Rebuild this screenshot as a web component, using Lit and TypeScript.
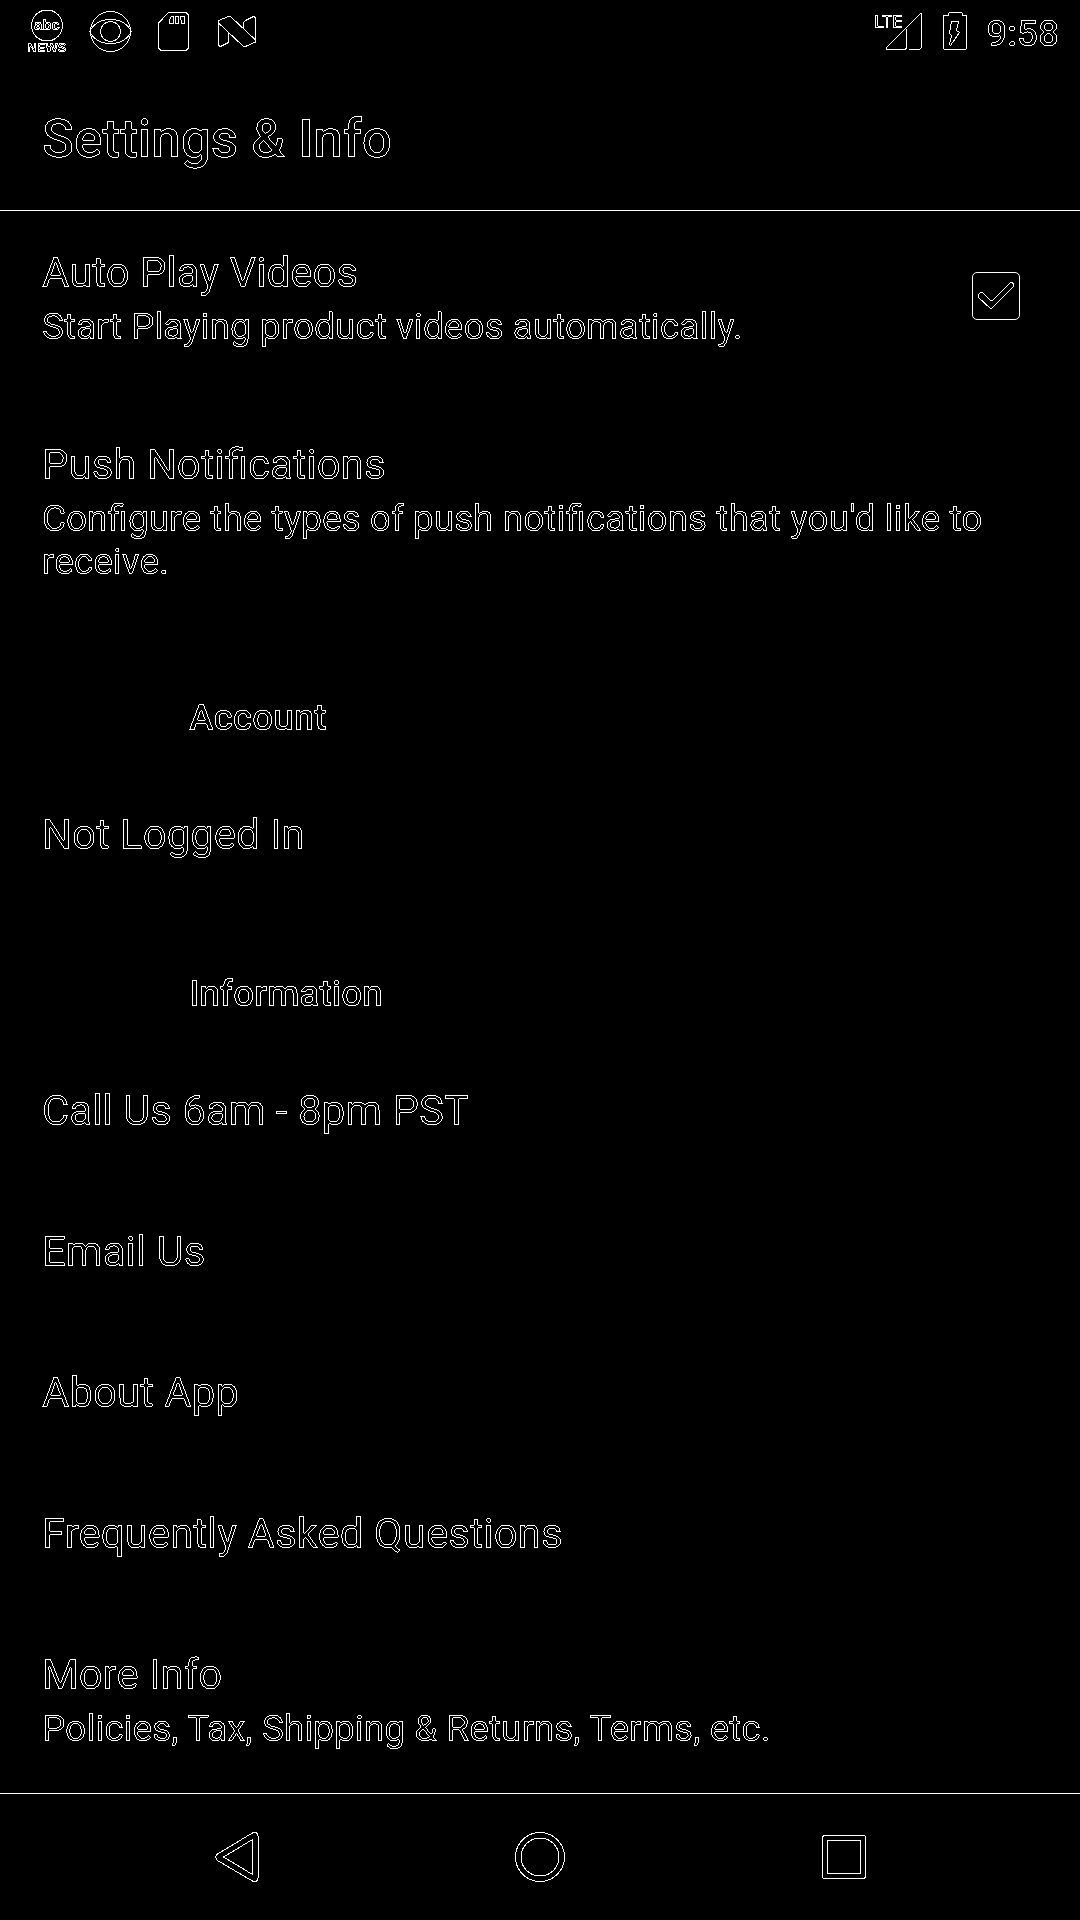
import { LitElement, html, css, svg, nothing } from "lit";
import { customElement, state } from "lit/decorators.js";

interface Entry {
  title: string;
  summary?: string;
  href: string;
}

const ACCOUNT: Entry[] = [{ title: "Not Logged In", href: "#login" }];

const INFORMATION: Entry[] = [
  { title: "Call Us 6am - 8pm PST", href: "#call" },
  { title: "Email Us", href: "#email" },
  { title: "About App", href: "#about" },
  { title: "Frequently Asked Questions", href: "#faq" },
  { title: "More Info", summary: "Policies, Tax, Shipping & Returns, Terms, etc.", href: "#more" },
];

// Keeps only the one-pixel contour of whatever it is applied to.
const contour = html`<svg class="defs" width="0" height="0" aria-hidden="true">
  <filter id="contour" x="-5%" y="-20%" width="110%" height="140%" color-interpolation-filters="sRGB">
    <feComponentTransfer><feFuncA type="linear" slope="255" intercept="-60" /></feComponentTransfer>
    <feConvolveMatrix order="3" kernelMatrix="0 -1 0 -1 4 -1 0 -1 0" divisor="1" edgeMode="none" preserveAlpha="false" />
  </filter>
</svg>`;

const outlined = css`
  :host {
    font-family: Roboto, "Liberation Sans", sans-serif;
    color: #fff;
  }
  svg {
    display: block;
    flex: none;
    fill: none;
    stroke: #fff;
    stroke-width: 1;
    shape-rendering: crispEdges;
  }
  .defs {
    position: absolute;
  }
  .title,
  .summary,
  .heading,
  .section,
  .clock,
  .mark {
    filter: url(#contour);
  }
`;

@customElement("status-bar")
class StatusBar extends LitElement {
  static styles = [
    outlined,
    css`
      :host {
        display: flex;
        justify-content: space-between;
        align-items: center;
        height: 63px;
        padding: 0 21px 0 25px;
      }
      .group {
        display: flex;
        align-items: center;
        gap: 20px;
      }
      .right {
        gap: 16px;
      }
      .clock {
        padding-top: 3px;
        font-size: 37px;
        line-height: 43px;
        font-weight: 500;
      }
      .mark {
        fill: #fff;
        stroke: none;
      }
      .abc {
        font: 700 15px "Liberation Sans", sans-serif;
      }
      .news {
        font: 700 13px "Liberation Sans", sans-serif;
      }
      .lte {
        font: 500 18px Roboto, sans-serif;
      }
    `,
  ];

  render() {
    return html`
      ${contour}
      <div class="group">
        <svg width="44" height="63" viewBox="25 0 44 63">
          <circle cx="47" cy="25.5" r="15.5" />
          <text class="mark abc" x="47" y="30" text-anchor="middle">abc</text>
          <text class="mark news" x="47" y="52" text-anchor="middle">NEWS</text>
        </svg>
        <svg width="44" height="63" viewBox="89 0 44 63">
          <circle cx="110.5" cy="31.5" r="20" />
          <path d="M89.5 31.5C94 23 102 19.5 110.5 19.5S127 23 131.5 31.5C127 40 119 43.5 110.5 43.5S94 40 89.5 31.5Z" />
          <circle cx="110.5" cy="31.5" r="10" />
        </svg>
        <svg width="44" height="63" viewBox="153 0 44 63">
          <path d="M168.500 12.500H186L188.500 15V48L186 50.500H161L158.500 48V23Z" />
          <path d="M170.500 17.500L169.500 20.500V23.500H173.500V16.500H171.500ZM175.500 16.500H178.500V23.500H175.500ZM180.500 16.500H184.500V23.500H181.500Z" />
        </svg>
        <svg width="44" height="63" viewBox="217 0 44 63">
          <path d="M218.500 20.500L228.500 16.500H230.500L255.500 40V42L245.500 46.500H243.500L218.500 23Z" />
          <path d="M218.500 20.500V45.500L220.500 46.500L228.500 42.500V32.500M255.500 41V17.500L253.500 16.500L245.500 20.500L243.500 22.500V29" />
        </svg>
      </div>
      <div class="group right">
        <svg width="50" height="63" viewBox="874 0 50 63">
          <path d="M886.500 49.500V47.500L920.500 13.500H921.500V47.500L919.500 49.500H909M886.500 49.500H905L906.500 48V29" />
          <text class="mark lte" x="874" y="28">LTE</text>
        </svg>
        <svg width="30" height="63" viewBox="940 0 30 63">
          <path d="M943.500 15.500H948.500V13.500L949.500 12.500H961.500L962.500 13.500V15.500H966.500V48.500L965.500 49.500H944.500L943.500 48.500Z" />
          <path d="M951.500 21.500H958.500L956.500 30.500L959.500 32.500L950.500 45.500L949.500 44.500L951.500 35.500L949.500 33.500Z" />
        </svg>
        <time class="clock">9:58</time>
      </div>
    `;
  }
}

@customElement("setting-row")
class SettingRow extends LitElement {
  static properties = { entry: { attribute: false } };
  declare entry: Entry;

  static styles = [
    outlined,
    css`
      :host {
        display: block;
      }
      .row {
        display: flex;
        flex-direction: column;
        gap: 8px;
        padding: 37px 42px 55px;
        color: inherit;
        text-decoration: none;
      }
      .title {
        font-size: 42px;
        line-height: 49px;
      }
      .summary {
        font-size: 37px;
        line-height: 43px;
      }
    `,
  ];

  render() {
    const { title, summary, href } = this.entry;
    return html`${contour}<a class="row" href=${href}>
      <span class="title">${title}</span>
      ${summary ? html`<span class="summary">${summary}</span>` : nothing}
    </a>`;
  }
}

@customElement("nav-bar")
class NavBar extends LitElement {
  static styles = [
    outlined,
    css`
      :host {
        display: flex;
        justify-content: center;
        border-top: 1px solid #fff;
        height: 126px;
      }
      .key {
        display: flex;
        flex: 0 1 304px;
        align-items: center;
        justify-content: center;
        border: 0;
        padding: 0;
        background: none;
      }
    `,
  ];

  render() {
    const keys = [
      {
        label: "Back",
        shape: svg`<path d="M7.500 23L41.500 2.500Q47.500 -1 48.500 6.500V45.500Q47.500 53 41.500 49.500L7.500 29.500Q4 26 7.500 23Z M13.500 26L42.500 8.500V43.500Z" />`,
      },
      { label: "Home", shape: svg`<circle cx="26" cy="26" r="24.500" /><circle cx="26" cy="26" r="19" />` },
      {
        label: "Recent apps",
        shape: svg`<rect x="4.500" y="4.500" width="43" height="43" rx="2.500" /><rect x="9.500" y="9.500" width="33" height="33" rx="1" />`,
      },
    ];
    return keys.map(
      (k) => html`<button class="key" type="button" aria-label=${k.label}>
        <svg width="52" height="52" viewBox="0 0 52 52">${k.shape}</svg>
      </button>`
    );
  }
}

@customElement("app-root")
class AppRoot extends LitElement {
  @state() autoPlay = true;

  static styles = [
    outlined,
    css`
      :host {
        display: flex;
        flex-direction: column;
        min-height: 100vh;
        background: #000;
      }
      .toolbar {
        padding: 45px 42px 40px;
        border-bottom: 1px solid #fff;
      }
      .heading {
        margin: 0;
        font-size: 53px;
        line-height: 62px;
        font-weight: 500;
      }
      .content {
        flex: 1;
      }
      .section {
        margin: 0;
        padding: 58px 42px 34px 189px;
        font-size: 37px;
        line-height: 43px;
        font-weight: 500;
      }
      .toggle {
        display: flex;
        justify-content: space-between;
        align-items: flex-start;
        padding: 37px 60px 55px 42px;
      }
      .label {
        display: flex;
        flex-direction: column;
        gap: 8px;
      }
      .title {
        font-size: 42px;
        line-height: 49px;
      }
      .summary {
        font-size: 37px;
        line-height: 43px;
      }
      .tick {
        display: grid;
        margin-top: 24px;
      }
      .box,
      .tick svg {
        grid-area: 1 / 1;
      }
      .box {
        appearance: none;
        width: 48px;
        height: 48px;
        margin: 0;
        border: 1px solid #fff;
        border-radius: 5px;
      }
      .tick svg {
        pointer-events: none;
      }
      .last {
        margin-bottom: -55px;
      }
    `,
  ];

  private toggle(e: Event) {
    this.autoPlay = (e.target as HTMLInputElement).checked;
  }

  render() {
    return html`
      ${contour}
      <status-bar></status-bar>
      <header class="toolbar"><h1 class="heading">Settings &amp; Info</h1></header>
      <main class="content">
        <div class="toggle">
          <label class="label" for="autoplay">
            <span class="title">Auto Play Videos</span>
            <span class="summary">Start Playing product videos automatically.</span>
          </label>
          <span class="tick">
            <input class="box" id="autoplay" type="checkbox" .checked=${this.autoPlay} @change=${this.toggle} />
            <svg width="48" height="48" viewBox="0 0 48 48">
              ${this.autoPlay
                ? svg`<path d="M6.500 22.500L8.500 20.500H10.500L18.500 28.500H20.500L38.500 10.500H40.500L41.500 12.500V14.500L19.500 36.500H18.500L6.500 25.500Z" />`
                : nothing}
            </svg>
          </span>
        </div>
        <setting-row
          .entry=${{
            title: "Push Notifications",
            summary: "Configure the types of push notifications that you'd like to receive.",
            href: "#push",
          }}
        ></setting-row>
        <h2 class="section">Account</h2>
        ${ACCOUNT.map((e) => html`<setting-row .entry=${e}></setting-row>`)}
        <h2 class="section">Information</h2>
        ${INFORMATION.map(
          (e, i) => html`<setting-row class=${i === INFORMATION.length - 1 ? "last" : ""} .entry=${e}></setting-row>`
        )}
      </main>
      <nav-bar></nav-bar>
    `;
  }
}
